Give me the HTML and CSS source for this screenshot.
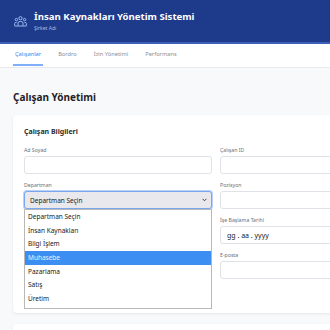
FILE: index.html
```html
<!DOCTYPE html>
<html lang="tr">
<head>
    <meta charset="UTF-8">
    <meta name="viewport" content="width=device-width, initial-scale=1.0">
    <title>İnsan Kaynakları Yönetim Sistemi</title>
    <link rel="stylesheet" href="styles.css">
</head>
<body>
    <header class="topbar">
        <svg class="logo" width="13" height="11" viewBox="0 0 13 11" fill="none" stroke="#9bbcf2" stroke-width="1">
            <circle cx="6.5" cy="2.2" r="1.6"/>
            <circle cx="2.4" cy="3.6" r="1.2"/>
            <circle cx="10.6" cy="3.6" r="1.2"/>
            <path d="M4 9.5 V7 Q4 5.4 6.5 5.4 Q9 5.4 9 7 V9.5"/>
            <path d="M0.6 9.5 V7.6 Q0.6 6.3 2.6 6.3"/>
            <path d="M12.4 9.5 V7.6 Q12.4 6.3 10.4 6.3"/>
            <path d="M0.5 10 H12.5"/>
        </svg>
        <div class="brand">
            <div class="brand-title">İnsan Kaynakları Yönetim Sistemi</div>
            <div class="brand-sub">Şirket Adı</div>
        </div>
    </header>

    <nav class="tabs">
        <a class="tab active">Çalışanlar</a>
        <a class="tab">Bordro</a>
        <a class="tab">İzin Yönetimi</a>
        <a class="tab">Performans</a>
    </nav>

    <main class="content">
        <h2 class="page-title">Çalışan Yönetimi</h2>

        <section class="card">
            <h3 class="card-title">Çalışan Bilgileri</h3>
            <div class="form-grid">
                <div class="col">
                    <div class="field">
                        <label>Ad Soyad</label>
                        <div class="input"></div>
                    </div>
                    <div class="field select-field">
                        <label>Departman</label>
                        <div class="select">
                            <span>Departman Seçin</span>
                            <svg width="5" height="4" viewBox="0 0 5 4"><path d="M0.6 0.8 L2.5 2.8 L4.4 0.8" fill="none" stroke="#333" stroke-width="0.9"/></svg>
                        </div>
                        <!-- açık seçim listesi -->
                        <ul class="dropdown">
                            <li>Departman Seçin</li>
                            <li>İnsan Kaynakları</li>
                            <li>Bilgi İşlem</li>
                            <li class="selected">Muhasebe</li>
                            <li>Pazarlama</li>
                            <li>Satış</li>
                            <li>Üretim</li>
                        </ul>
                    </div>
                    <!-- listenin altında kalan alanlar -->
                    <div class="field">
                        <div class="label-space"></div>
                        <div class="input"></div>
                    </div>
                    <div class="field">
                        <div class="label-space"></div>
                        <div class="input"></div>
                    </div>
                </div>
                <div class="col">
                    <div class="field">
                        <label>Çalışan ID</label>
                        <div class="input"></div>
                    </div>
                    <div class="field">
                        <label>Pozisyon</label>
                        <div class="input"></div>
                    </div>
                    <div class="field">
                        <label>İşe Başlama Tarihi</label>
                        <div class="input date">gg . aa . yyyy</div>
                    </div>
                    <div class="field">
                        <label>E-posta</label>
                        <div class="input"></div>
                    </div>
                </div>
            </div>
        </section>

        <section class="card next"></section>
    </main>
</body>
</html>
```

FILE: styles.css
```css
html {
    overflow: hidden;
}
body {
    margin: 0;
    font-family: "Noto Sans", "Open Sans", Arial, sans-serif;
    background-color: #f8f9fb;
    color: #212529;
    width: 440px;
}
.topbar {
    display: flex;
    align-items: center;
    gap: 7px;
    height: 42px;
    padding: 0 13px 0 14px;
    background-color: #1e3a8a;
    border-bottom: 2px solid #3c5fb8;
}
.logo {
    display: block;
    margin-top: 1px;
}
.brand-title {
    color: #fff;
    font-size: 9.6px;
    font-weight: bold;
    line-height: 13px;
}
.brand-sub {
    color: #a9bde6;
    font-size: 5px;
    line-height: 7px;
    margin-top: 2px;
}
.tabs {
    display: flex;
    gap: 13px;
    height: 23px;
    padding: 0 13px;
    background-color: #fff;
    border-bottom: 1px solid #e8eaee;
}
.tab {
    display: flex;
    align-items: center;
    padding: 0 2px;
    font-size: 5.7px;
    color: #8a8f98;
    border-bottom: 2px solid transparent;
    margin-bottom: 1px;
}
.tab.active {
    color: #3b82f6;
    border-bottom-color: #7fb0f7;
}
.content {
    padding: 22px 13px 0;
}
.page-title {
    margin: 0 0 11px;
    font-size: 10px;
    line-height: 14px;
    font-weight: bold;
    color: #1f2328;
}
.card {
    background-color: #fff;
    border-radius: 4px;
    box-shadow: 0 1px 3px rgba(0, 0, 0, 0.08);
    padding: 12px 11px 26px;
}
.card.next {
    margin-top: 11px;
    height: 40px;
    padding: 0;
}
.card-title {
    margin: 0 0 10px;
    font-size: 7px;
    line-height: 10px;
    font-weight: bold;
    color: #2b2f33;
}
.form-grid {
    display: grid;
    grid-template-columns: 188px 188px;
    gap: 8px;
}
.field {
    margin-bottom: 8px;
}
.field label {
    display: block;
    font-size: 5.2px;
    line-height: 7px;
    color: #6c7079;
    margin-bottom: 2px;
}
.label-space {
    height: 7px;
    margin-bottom: 2px;
}
.input {
    box-sizing: border-box;
    height: 18px;
    border: 1px solid #dfe2e6;
    border-radius: 3px;
    background-color: #fff;
}
.input.date {
    display: flex;
    align-items: center;
    padding-left: 6px;
    font-size: 7px;
    color: #222;
}
.select-field {
    position: relative;
}
.select {
    box-sizing: border-box;
    height: 18px;
    display: flex;
    align-items: center;
    justify-content: space-between;
    padding: 0 4px 0 5px;
    font-size: 6.5px;
    color: #222;
    background-color: #e9e9ed;
    border: 1px solid #7aa7ec;
    border-radius: 3px;
    box-shadow: 0 0 0 1px #b9d1f6;
}
.dropdown {
    position: absolute;
    left: 0;
    right: 0;
    top: 27px;
    margin: 0;
    padding: 0 0 2px;
    list-style: none;
    background-color: #fff;
    border: 1px solid #b8b8b8;
    z-index: 2;
}
.dropdown li {
    height: 13.7px;
    line-height: 13.7px;
    padding-left: 3px;
    font-size: 6.5px;
    color: #222;
}
.dropdown li.selected {
    background-color: #3d8ef2;
    color: #e8f1fe;
}
```
